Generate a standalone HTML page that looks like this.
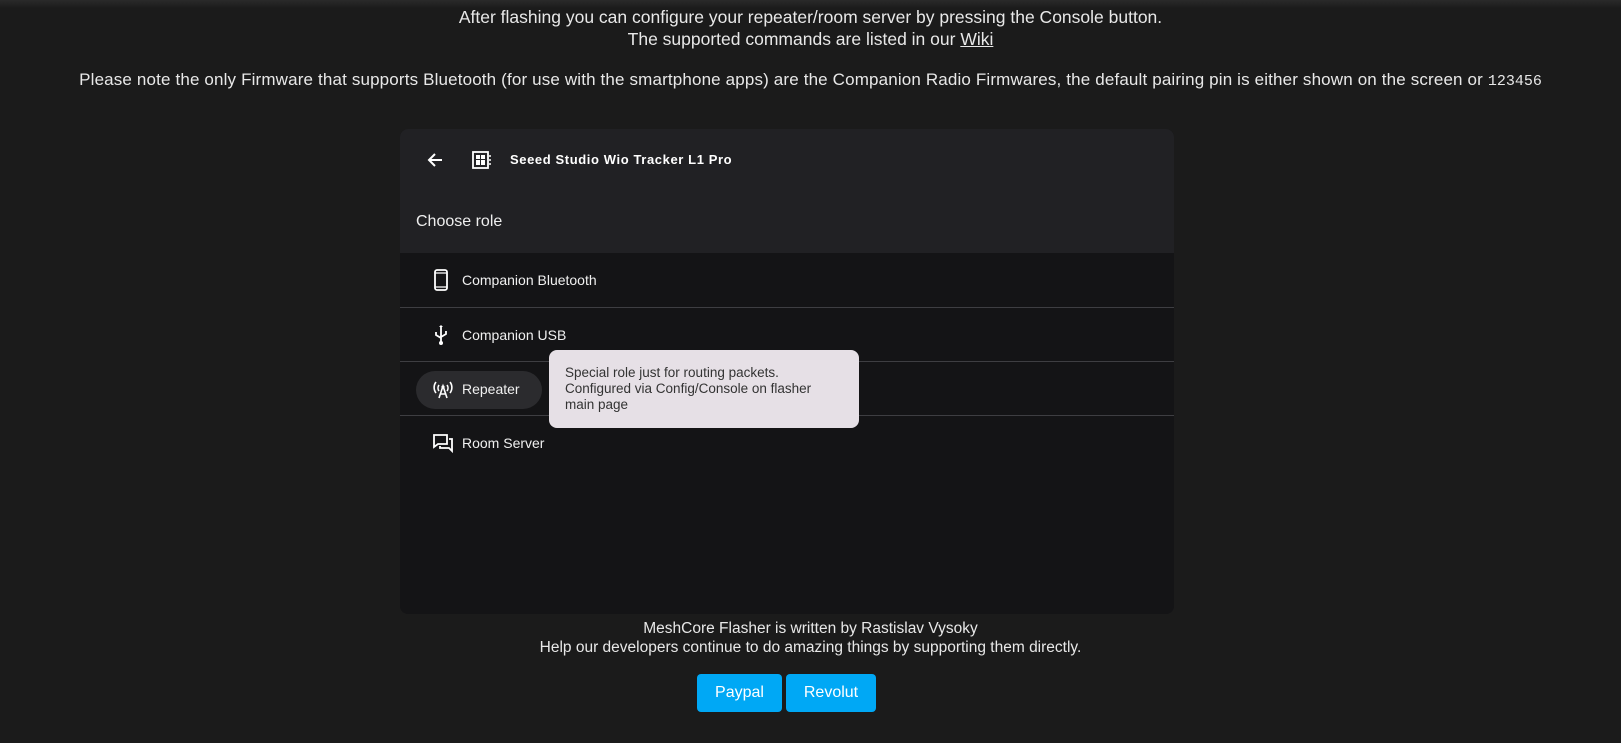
<!DOCTYPE html>
<html><head><style>
body{margin:0;width:1621px;height:743px;background:#1b1b1b;font-family:"Liberation Sans",sans-serif;color:#e8e8e8;position:relative;overflow:hidden}
.top{position:absolute;left:0;top:0;width:1621px;height:8px;background:linear-gradient(#2a2a2a,#1b1b1b)}
.c{position:absolute;left:0;width:1621px;text-align:center;font-size:17.5px;white-space:nowrap}
.card{position:absolute;left:400px;top:129px;width:774px;height:485px;background:#141416;border-radius:8px;overflow:hidden}
.hd{height:124px;background:#212124}
.row{position:absolute;left:0;width:774px;height:54px;border-top:1px solid #3e3e42;font-size:14px;color:#f0f0f0}
.row span{position:absolute;left:62px;top:19px}
.ic{position:absolute;left:32px;top:16px}
.tip{position:absolute;left:549px;top:350px;width:310px;height:78px;background:#e6e0e6;border-radius:8px;color:#333;font-size:13.5px;line-height:16px;box-sizing:border-box;padding:15px 16px}
.btn{position:absolute;top:674px;height:38px;background:#00a8f5;border-radius:4px;color:#fff;font-size:16px;text-align:center;line-height:38px}
</style></head><body>
<div class="top"></div>
<div class="c" style="top:7px">After flashing you can configure your repeater/room server by pressing the Console button.</div>
<div class="c" style="top:29px">The supported commands are listed in our <u>Wiki</u></div>
<div class="c" style="top:70px;font-size:17px;letter-spacing:0.15px">Please note the only Firmware that supports Bluetooth (for use with the smartphone apps) are the Companion Radio Firmwares, the default pairing pin is either shown on the screen or <span style="font-family:'Liberation Mono',monospace;font-size:15px;letter-spacing:0">123456</span></div>
<div class="card">
<div class="hd"></div>
<svg style="position:absolute;left:26px;top:22px" width="18" height="18" viewBox="0 0 18 18"><path d="M16 9H3M9 3L3 9l6 6" stroke="#fff" stroke-width="2" fill="none"/></svg>
<svg style="position:absolute;left:72px;top:22px" width="20" height="18" viewBox="0 0 20 18"><rect x="1" y="1" width="15" height="16" fill="none" stroke="#fff" stroke-width="1.8"/><rect x="4" y="4" width="4" height="4" fill="#fff"/><rect x="9" y="4" width="4" height="4" fill="#fff"/><rect x="4" y="9" width="4" height="5" fill="#fff"/><rect x="9" y="9" width="4" height="5" fill="#fff"/><path d="M17 5h2M17 9h2M17 13h2" stroke="#fff" stroke-width="1.5"/></svg>
<div style="position:absolute;left:110px;top:23px;font-size:13px;font-weight:bold;letter-spacing:.6px;color:#fff">Seeed Studio Wio Tracker L1 Pro</div>
<div style="position:absolute;left:16px;top:84px;font-size:16px;color:#eee">Choose role</div>
<div class="row" style="top:124px;border-top:none"><svg class="ic" width="18" height="22" viewBox="0 0 18 22"><rect x="3" y="1" width="12" height="20" rx="2" fill="none" stroke="#fff" stroke-width="1.8"/><path d="M3 4h12M3 18h12" stroke="#fff" stroke-width="1.2"/></svg><span>Companion Bluetooth</span></div>
<div class="row" style="top:178px"><svg class="ic" width="18" height="22" viewBox="0 0 18 22"><path d="M9 2v18M4 8v3l5 3M14 7v3l-5 3" stroke="#fff" stroke-width="1.8" fill="none"/><circle cx="9" cy="19" r="2" fill="#fff"/><path d="M7 3l2-2 2 2z" fill="#fff"/></svg><span>Companion USB</span></div>
<div class="row" style="top:232px"><div style="position:absolute;left:16px;top:9px;width:126px;height:38px;border-radius:19px;background:#2b2b2e"></div><svg class="ic" width="22" height="22" viewBox="0 0 22 22"><path d="M4 4a9 9 0 0 0 0 11M18 4a9 9 0 0 1 0 11M7 7a5 5 0 0 0 0 6M15 7a5 5 0 0 1 0 6M7 20l4-12 4 12M8.5 16h5" stroke="#fff" stroke-width="1.6" fill="none"/><circle cx="11" cy="9" r="1.6" fill="#fff"/></svg><span>Repeater</span></div>
<div class="row" style="top:286px"><svg class="ic" width="22" height="22" viewBox="0 0 22 22"><path d="M2 3h13v9H6l-4 3z" fill="none" stroke="#fff" stroke-width="1.8"/><path d="M17 7h3v12l-3-3H8v-2" fill="none" stroke="#fff" stroke-width="1.8"/></svg><span>Room Server</span></div>
</div>
<div class="tip">Special role just for routing packets. Configured via Config/Console on flasher main page</div>
<div class="c" style="top:620px;font-size:15.5px">MeshCore Flasher is written by Rastislav Vysoky</div>
<div class="c" style="top:639px;font-size:15.5px">Help our developers continue to do amazing things by supporting them directly.</div>
<div class="btn" style="left:697px;width:85px">Paypal</div>
<div class="btn" style="left:786px;width:90px">Revolut</div>
</body></html>
